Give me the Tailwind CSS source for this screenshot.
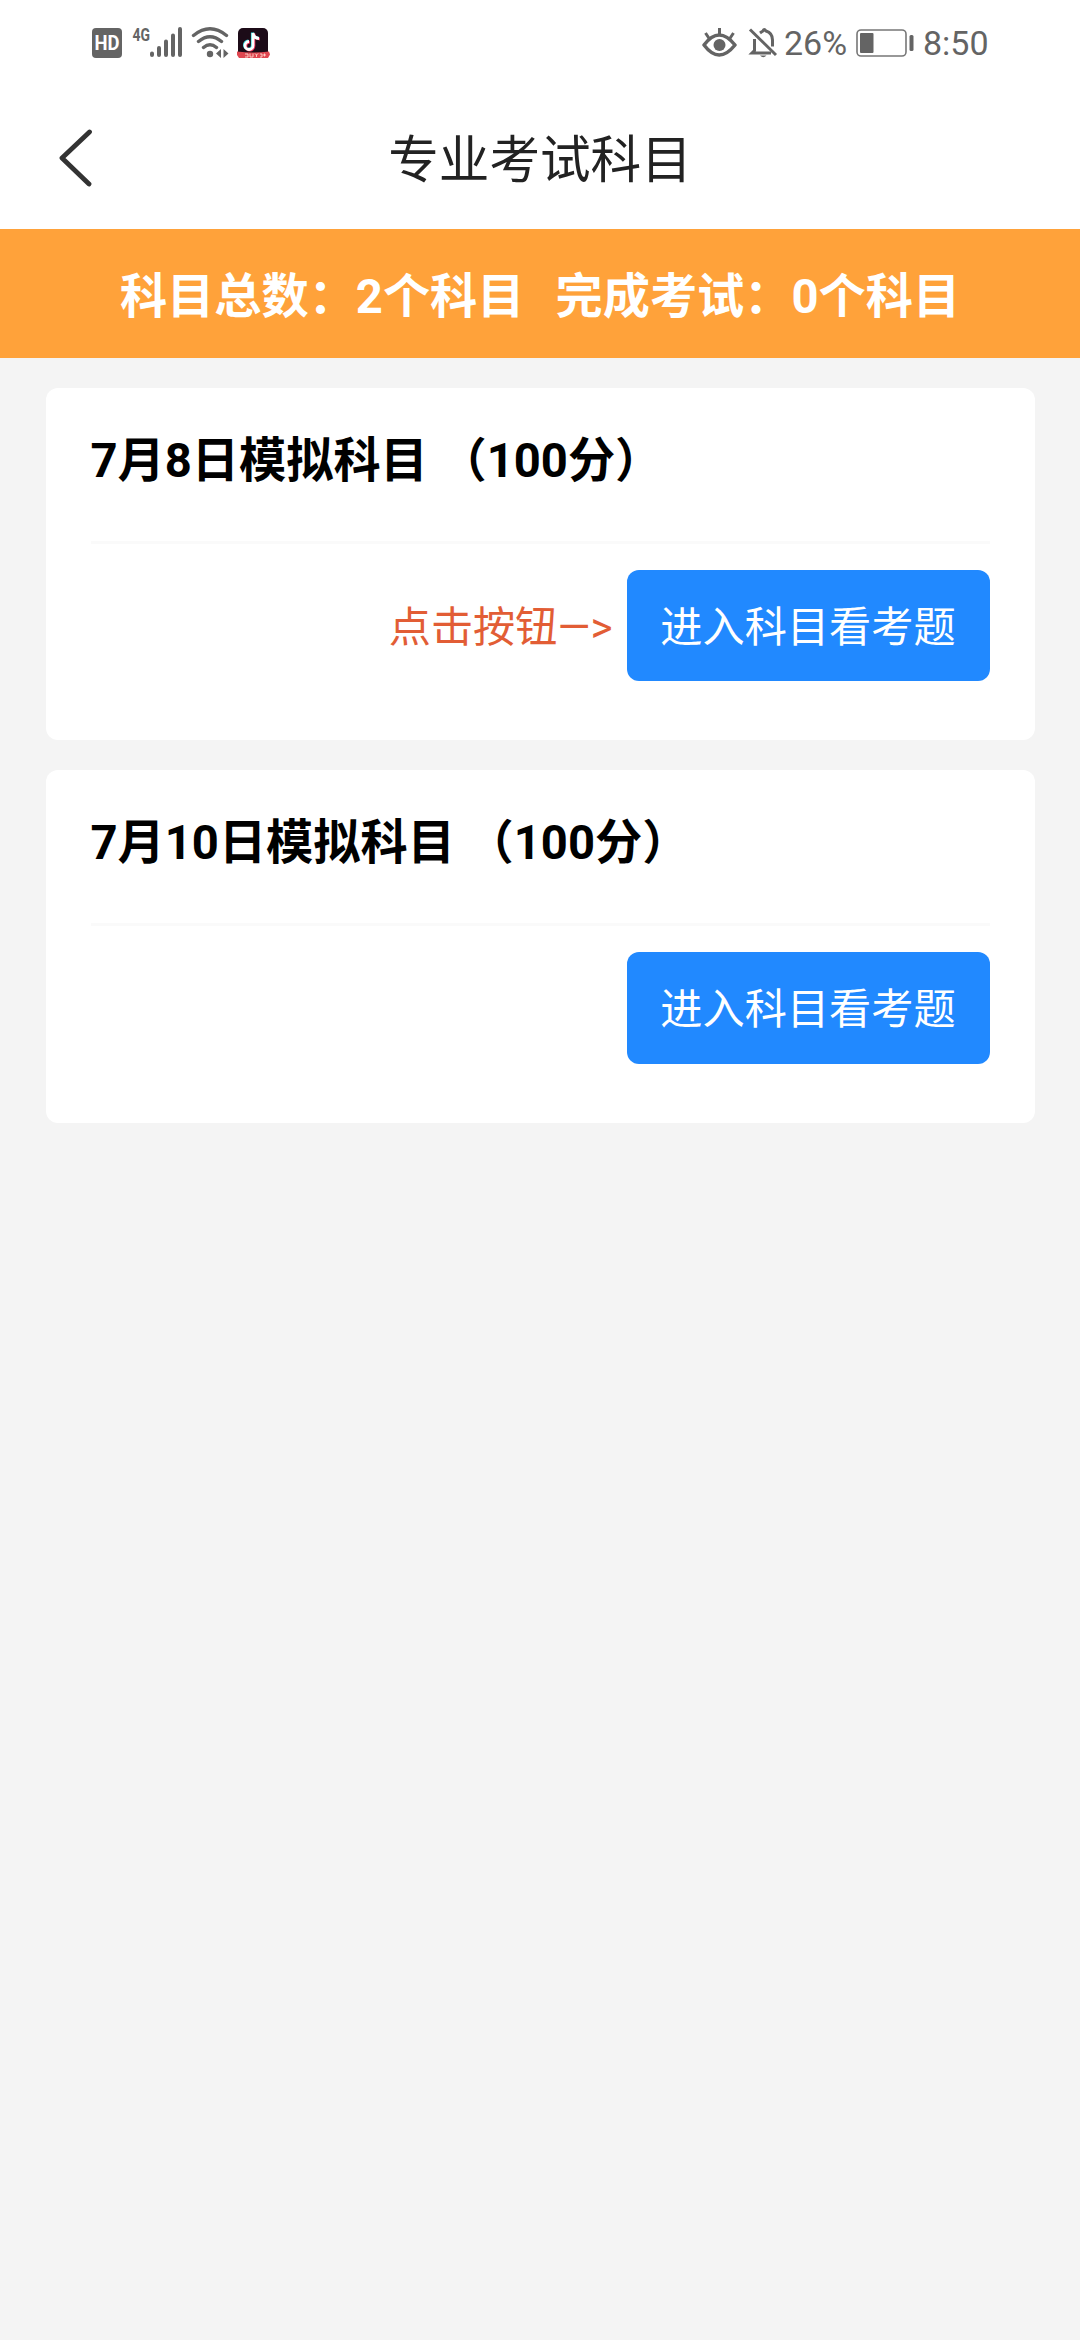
<!DOCTYPE html>
<html lang="zh-CN">
<head>
  <meta charset="UTF-8"/>
  <title>专业考试科目</title>
  <meta name="viewport" content="width=device-width,initial-scale=1"/>

  <!-- Tailwind CSS -->
  <script src="https://cdn.jsdelivr.net/npm/@tailwindcss/browser@4"></script>
</head>

<body class="bg-[#f4f4f4] min-h-screen font-[Roboto,'Noto_Sans_CJK_SC',sans-serif]">
  <header class="bg-white h-[229px]">
    <!-- Status bar -->
    <div class="h-[85px] pl-[92px] pr-[91px] flex items-center justify-between text-[#646464]">
      <svg class="w-[180px] h-[40px]" viewBox="92 23 180 40" fill="none">
        <rect x="92" y="28" width="30" height="30" rx="4" fill="#646464"/>
        <text x="107" y="50" text-anchor="middle" textLength="25" lengthAdjust="spacingAndGlyphs" font-size="20" font-weight="700" fill="#fff">HD</text>
        <text x="132.5" y="40.8" textLength="17.5" lengthAdjust="spacingAndGlyphs" font-size="19" font-weight="700" fill="#646464">4G</text>
        <!-- signal -->
        <g stroke="#646464" stroke-width="4" stroke-linecap="round">
          <path d="M152 53.5v1.5M159 48v7M166 41.5v13.5M173 35.500v19.500M180 29v26"/>
        </g>
        <!-- wifi -->
        <g stroke="#646464" stroke-width="3.4" stroke-linecap="round">
          <path d="M193.500 35.500Q210 22 226.500 35.500M198.500 41.500Q210 32 221.500 41.500M203.500 47.500Q210 42 216.500 47.500"/>
        </g>
        <circle cx="210" cy="54" r="3.200" fill="#646464"/>
        <path d="M221 49v9l-5-4.500zM223.500 49v9l5-4.500z" fill="#646464"/>
        <!-- app icon -->
        <rect x="238" y="28" width="30" height="30" rx="5" fill="#1c0b18"/>
        <g stroke-width="2.800">
          <path d="M253 33v12.500a4 4 0 1 1-4-4M253 33q.5 5 6 5.500" stroke="#35d8dc" transform="translate(-.7 -.5)"/>
          <path d="M253 33v12.500a4 4 0 1 1-4-4M253 33q.5 5 6 5.500" stroke="#ef3058" transform="translate(.9 .6)"/>
          <path d="M253 33v12.500a4 4 0 1 1-4-4M253 33q.5 5 6 5.500" stroke="#fff"/>
        </g>
        <path d="M237 51.500q16 2 32 0l1 3-2 3.500h-29l-2-3z" fill="#df4650"/>
        <path d="M245 54h3v3h-3M250 53.500v3.500h3v-3.500M255 53.500l1.500 1.500 1.500-1.500M256.500 55v2M260 54h2v3h-2M264.500 53.500v3M263 55h3" stroke="#ffd9cf" stroke-width=".9"/>
      </svg>
      <div class="flex items-center text-[34px] leading-none">
        <svg class="w-[82px] h-[40px]" viewBox="702 23 82 40" fill="none" stroke="#646464" stroke-width="3.500">
          <path d="M704 45q15-20 31 0-16 20-31 0z" stroke-linejoin="round"/>
          <circle cx="719.500" cy="45" r="6" fill="#646464" stroke="none"/>
          <path d="M719.500 28v7M705.500 33l4 6M733.500 33l-4 6" stroke-width="3"/>
          <path d="M750 29.500l26 25.500" stroke-width="3"/>
          <path d="M754.500 39v11.500l-2.500 2.500h19M760 33q2-1.500 3-2 1-3 3 0 6.500 2 6.500 9v6.500" stroke-width="3"/>
          <path d="M760 55.500h6.500q-3.200 3.500-6.500 0z" fill="#646464" stroke="none"/>
        </svg>
        <span class="w-[72px]">26%</span>
        <svg class="w-[60px] h-[40px] mr-[7px]" viewBox="856 23 60 40">
          <rect x="857" y="30" width="49" height="26" rx="4" fill="none" stroke="#777" stroke-width="1.600"/>
          <rect x="860" y="33" width="13.500" height="20" rx="1" fill="#646464"/>
          <rect x="909.500" y="35" width="4" height="16" rx="1.500" fill="#646464"/>
        </svg>
        <span class="w-[66px]">8:50</span>
      </div>
    </div>

    <!-- Title bar -->
    <div class="h-[144px] px-[56px] grid grid-cols-[60px_1fr_60px] items-center">
      <button aria-label="返回">
        <svg class="w-[40px] h-[60px]" viewBox="0 0 40 60" fill="none" stroke="#333" stroke-width="4.800" stroke-linecap="round" stroke-linejoin="round">
          <path d="M33.500 5L6 31l27 26"/>
        </svg>
      </button>
      <h1 class="pt-2 text-center text-[50.600px] leading-none text-[#222]">专业考试科目</h1>
    </div>
  </header>

  <!-- Summary -->
  <div class="bg-[#ffa23a] h-[129px] flex items-center justify-center gap-[31px] pt-[7px] text-[47.200px] font-bold text-white whitespace-nowrap">
    <span>科目总数：2个科目</span>
    <span>完成考试：0个科目</span>
  </div>

  <!-- Subject list -->
  <main class="px-[45.500px] pt-[30px] space-y-[30px]">
    <section class="bg-white rounded-[12px] h-[352px] px-[45px]">
      <h2 class="h-[156px] pt-[39px] border-b-[3px] border-[#fafafa] text-[47.200px] leading-[68px] font-bold text-black whitespace-pre">7月8日模拟科目 （100分）</h2>
      <div class="pt-[26px] flex items-center justify-end gap-[14px] text-[42.200px]">
        <span class="pt-1 text-[#e25d35]">点击按钮—&gt;</span>
        <button class="w-[363px] h-[111px] pt-1 rounded-[12px] bg-[#2189ff] text-white">进入科目看考题</button>
      </div>
    </section>
    <section class="bg-white rounded-[12px] h-[353px] px-[45px]">
      <h2 class="h-[156px] pt-[39px] border-b-[3px] border-[#fafafa] text-[47.200px] leading-[68px] font-bold text-black whitespace-pre">7月10日模拟科目 （100分）</h2>
      <div class="pt-[26px] flex items-center justify-end gap-[14px] text-[42.200px]">
        <button class="w-[363px] h-[112px] pt-1 rounded-[12px] bg-[#2189ff] text-white">进入科目看考题</button>
      </div>
    </section>
  </main>
</body>
</html>
